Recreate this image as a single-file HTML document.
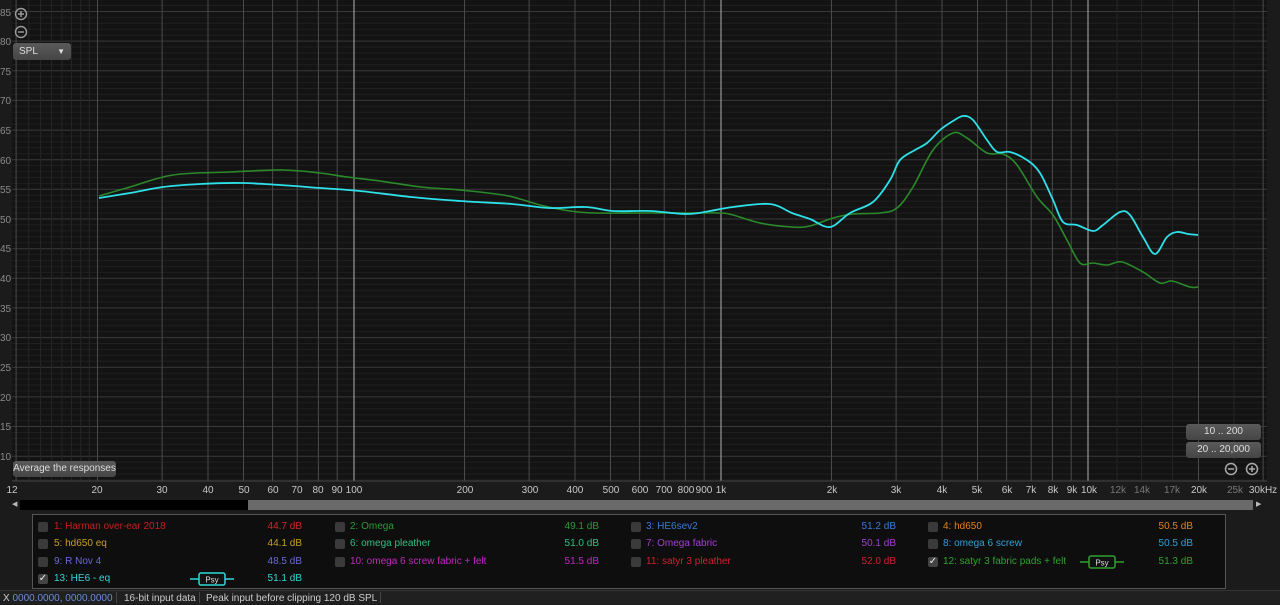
<!DOCTYPE html>
<html><head><meta charset="utf-8"><style>
body{margin:0;width:1280px;height:603px;background:#1b1b1b;overflow:hidden;font-family:"Liberation Sans",sans-serif;position:relative}
.a{position:absolute;white-space:nowrap}
.yl{position:absolute;left:0;font-size:10px;color:#8a8a8a;width:10px;text-align:left}
.xl{position:absolute;top:485px;font-size:10px;color:#c8c8c8;transform:translateX(-50%)}
.xl.g{color:#777}
.btn{position:absolute;background:linear-gradient(#5a5a5a,#454545);border-radius:3px;color:#ddd;font-size:10px;text-align:center}
.cb{position:absolute;width:10px;height:10px;background:#3a3a3a;border-radius:2px}
.lt{position:absolute;font-size:10px}
.ld{position:absolute;font-size:10px;text-align:right;width:60px}
.st{position:absolute;top:592px;height:11px;font-size:10px;color:#ccc;border-right:1px solid #444;padding:0 3px;line-height:13px}
</style></head><body>
<svg class="a" style="left:0;top:0" width="1280" height="500" id="g">
<rect x="12" y="0" width="1255" height="481" fill="#131313"/>
<g id="grid"></g>
<path id="c1" fill="none" stroke="#2a8a2a" stroke-width="1.6" data-p="99,196 130,187 173,175 230,172 283,170 320,173 347,177 380,181 421,187 460,190 503,195 520,199 540,205 570,211 595,213 640,213 687,213 720,213 733,215 760,223 792,227 810,226 833,218 853,214 880,213 897,208 913,187 933,150 953,133 967,138 987,153 1003,154 1017,165 1037,197 1053,215 1067,240 1080,263 1093,263 1107,265 1122,262 1143,272 1160,283 1172,281 1190,287 1198,287"/>
<path id="c2" fill="none" stroke="#2ee0e8" stroke-width="1.8" data-p="99,198 130,193 163,187 200,184 242,183 280,185 320,188 360,191 411,197 460,201 512,204 549,208 586,207 613,211 650,211 687,214 710,211 733,207 770,204 792,213 810,219 830,227 850,213 873,202 890,180 900,160 915,150 927,143 940,130 953,121 963,116 973,120 987,140 997,152 1010,152 1027,160 1040,173 1053,200 1063,222 1077,225 1093,231 1103,225 1120,212 1130,215 1143,237 1155,254 1167,237 1177,232 1188,234 1198,235"/>
</svg>
<script>
(function(){var s='',g=document.getElementById('grid');
function Y(d){return 219-(d-50)*5.93}
for(var d=6;d<=87;d++){var y=Y(d).toFixed(1);s+='<line x1="12" x2="1267" y1="'+y+'" y2="'+y+'" stroke="'+(d%5==0?'#3a3a3a':'#1f1f1f')+'"/>';}
function X(f){return 354+367*Math.log10(f/100)}
var fs=[12,13,14,15,16,17,18,19,20,30,40,50,60,70,80,90,100,200,300,400,500,600,700,800,900,1000,2000,3000,4000,5000,6000,7000,8000,9000,10000,12000,14000,17000,20000,25000,30000];
fs.forEach(function(f){var x=X(f).toFixed(1),c=(f==100||f==1000||f==10000)?'#b0b0b0':([12000,14000,17000,25000,13,14,15,16,17,18,19].indexOf(f)>=0?'#262626':'#4a4a4a');s+='<line x1="'+x+'" x2="'+x+'" y1="0" y2="481" stroke="'+c+'"/>';});
s+='<line x1="12" x2="1267" y1="481" y2="481" stroke="#444"/>';
g.innerHTML=s;
['c1','c2'].forEach(function(id){var e=document.getElementById(id);var p=e.getAttribute('data-p').split(' ').map(function(q){return q.split(',').map(Number)});
var d='M'+p[0][0]+' '+p[0][1];for(var i=0;i<p.length-1;i++){var p0=p[i-1]||p[i],p1=p[i],p2=p[i+1],p3=p[i+2]||p2;
d+=' C'+(p1[0]+(p2[0]-p0[0])/6).toFixed(1)+' '+(p1[1]+(p2[1]-p0[1])/6).toFixed(1)+' '+(p2[0]-(p3[0]-p1[0])/6).toFixed(1)+' '+(p2[1]-(p3[1]-p1[1])/6).toFixed(1)+' '+p2[0]+' '+p2[1];}
e.setAttribute('d',d);});
})();
</script>
<div class="yl" style="top:8px">85</div><div class="yl" style="top:37px">80</div><div class="yl" style="top:67px">75</div><div class="yl" style="top:96px">70</div><div class="yl" style="top:126px">65</div><div class="yl" style="top:156px">60</div><div class="yl" style="top:185px">55</div><div class="yl" style="top:215px">50</div><div class="yl" style="top:244px">45</div><div class="yl" style="top:274px">40</div><div class="yl" style="top:304px">35</div><div class="yl" style="top:333px">30</div><div class="yl" style="top:363px">25</div><div class="yl" style="top:393px">20</div><div class="yl" style="top:422px">15</div><div class="yl" style="top:452px">10</div>
<svg class="a" style="left:14px;top:7px" width="14" height="32"><circle cx="7" cy="7" r="5.5" fill="none" stroke="#999" stroke-width="1.5"/><path d="M4 7h6M7 4v6" stroke="#999" stroke-width="1.5"/><circle cx="7" cy="25" r="5.5" fill="none" stroke="#999" stroke-width="1.5"/><path d="M4 25h6" stroke="#999" stroke-width="1.5"/></svg>
<div class="btn" style="left:13px;top:43px;width:58px;height:17px;text-align:left;line-height:17px;padding-left:6px;box-sizing:border-box">SPL<span style="position:absolute;right:6px;top:0;font-size:8px">▼</span></div>
<div class="btn" style="left:13px;top:461px;width:103px;height:16px;line-height:16px">Average the responses</div>
<div class="btn" style="left:1186px;top:424px;width:75px;height:16px;line-height:16px">10 .. 200</div>
<div class="btn" style="left:1186px;top:442px;width:75px;height:16px;line-height:16px">20 .. 20,000</div>
<svg class="a" style="left:1224px;top:462px" width="38" height="14"><circle cx="7" cy="7" r="5.5" fill="none" stroke="#aaa" stroke-width="1.5"/><path d="M4 7h6" stroke="#aaa" stroke-width="1.5"/><circle cx="28" cy="7" r="5.5" fill="none" stroke="#aaa" stroke-width="1.5"/><path d="M25 7h6M28 4v6" stroke="#aaa" stroke-width="1.5"/></svg>
<div class="xl" style="left:12px">12</div><div class="xl" style="left:97px">20</div><div class="xl" style="left:162px">30</div><div class="xl" style="left:208px">40</div><div class="xl" style="left:244px">50</div><div class="xl" style="left:273px">60</div><div class="xl" style="left:297px">70</div><div class="xl" style="left:318px">80</div><div class="xl" style="left:337px">90</div><div class="xl" style="left:354px">100</div><div class="xl" style="left:465px">200</div><div class="xl" style="left:530px">300</div><div class="xl" style="left:575px">400</div><div class="xl" style="left:611px">500</div><div class="xl" style="left:640px">600</div><div class="xl" style="left:664px">700</div><div class="xl" style="left:686px">800</div><div class="xl" style="left:704px">900</div><div class="xl" style="left:721px">1k</div><div class="xl" style="left:832px">2k</div><div class="xl" style="left:896px">3k</div><div class="xl" style="left:942px">4k</div><div class="xl" style="left:977px">5k</div><div class="xl" style="left:1007px">6k</div><div class="xl" style="left:1031px">7k</div><div class="xl" style="left:1053px">8k</div><div class="xl" style="left:1072px">9k</div><div class="xl" style="left:1089px">10k</div><div class="xl g" style="left:1118px">12k</div><div class="xl g" style="left:1142px">14k</div><div class="xl g" style="left:1172px">17k</div><div class="xl" style="left:1199px">20k</div><div class="xl g" style="left:1235px">25k</div><div class="xl" style="left:1263px">30kHz</div>
<div class="a" style="left:12px;top:500px;font-size:7px;color:#bbb;line-height:10px">◀</div>
<div class="a" style="left:20px;top:500px;width:228px;height:10px;background:#000"></div>
<div class="a" style="left:248px;top:500px;width:1005px;height:10px;background:#6a6a6a"></div>
<div class="a" style="left:1256px;top:500px;font-size:7px;color:#bbb;line-height:10px">▶</div>
<div class="a" style="left:32px;top:514px;width:1192px;height:73px;background:#0e0e0e;border:1px solid #555"></div>
<div class="cb" style="left:38px;top:522px"></div><div class="lt" style="left:54px;top:521px;color:#c42020">1: Harman over-ear 2018</div><div class="ld" style="left:242px;top:521px;color:#d02828">44.7 dB</div>
<div class="cb" style="left:38px;top:539px"></div><div class="lt" style="left:54px;top:538px;color:#c8a020">5: hd650 eq</div><div class="ld" style="left:242px;top:538px;color:#c8a020">44.1 dB</div>
<div class="cb" style="left:38px;top:557px"></div><div class="lt" style="left:54px;top:556px;color:#6a6ad8">9: R Nov 4</div><div class="ld" style="left:242px;top:556px;color:#6a6ad8">48.5 dB</div>
<div class="cb" style="left:38px;top:574px;background:#444;color:#eee;font-size:10px;line-height:10px;text-align:center">✓</div><div class="lt" style="left:54px;top:573px;color:#30d8d8">13: HE6 - eq</div><div class="ld" style="left:242px;top:573px;color:#30d8d8">51.1 dB</div>
<svg class="a" style="left:190px;top:572px" width="44" height="14"><path d="M0 7h9M35 7h9" stroke="#30d8d8" stroke-width="1.5"/><rect x="9" y="1" width="26" height="12" rx="2" fill="#111" stroke="#30d8d8" stroke-width="1.5"/><text x="22" y="10.5" font-size="8" fill="#ddd" text-anchor="middle" font-family="Liberation Sans">Psy</text></svg>
<div class="cb" style="left:335px;top:522px"></div><div class="lt" style="left:350px;top:521px;color:#2a9a3a">2: Omega</div><div class="ld" style="left:539px;top:521px;color:#2a9a3a">49.1 dB</div>
<div class="cb" style="left:335px;top:539px"></div><div class="lt" style="left:350px;top:538px;color:#30c080">6: omega pleather</div><div class="ld" style="left:539px;top:538px;color:#30c080">51.0 dB</div>
<div class="cb" style="left:335px;top:557px"></div><div class="lt" style="left:350px;top:556px;color:#c028c0">10: omega 6 screw fabric + felt</div><div class="ld" style="left:539px;top:556px;color:#c028c0">51.5 dB</div>
<div class="cb" style="left:631px;top:522px"></div><div class="lt" style="left:646px;top:521px;color:#3a7ad8">3: HE6sev2</div><div class="ld" style="left:836px;top:521px;color:#3a7ad8">51.2 dB</div>
<div class="cb" style="left:631px;top:539px"></div><div class="lt" style="left:646px;top:538px;color:#a040d0">7: Omega fabric</div><div class="ld" style="left:836px;top:538px;color:#a040d0">50.1 dB</div>
<div class="cb" style="left:631px;top:557px"></div><div class="lt" style="left:646px;top:556px;color:#d02030">11: satyr 3 pleather</div><div class="ld" style="left:836px;top:556px;color:#d02030">52.0 dB</div>
<div class="cb" style="left:928px;top:522px"></div><div class="lt" style="left:943px;top:521px;color:#e08020">4: hd650</div><div class="ld" style="left:1133px;top:521px;color:#e08020">50.5 dB</div>
<div class="cb" style="left:928px;top:539px"></div><div class="lt" style="left:943px;top:538px;color:#30a0d8">8: omega 6 screw</div><div class="ld" style="left:1133px;top:538px;color:#30a0d8">50.5 dB</div>
<div class="cb" style="left:928px;top:557px;background:#444;color:#eee;font-size:10px;line-height:10px;text-align:center">✓</div><div class="lt" style="left:943px;top:556px;color:#30a030">12: satyr 3 fabric pads + felt</div><div class="ld" style="left:1133px;top:556px;color:#30a030">51.3 dB</div>
<svg class="a" style="left:1080px;top:555px" width="44" height="14"><path d="M0 7h9M35 7h9" stroke="#30a030" stroke-width="1.5"/><rect x="9" y="1" width="26" height="12" rx="2" fill="#111" stroke="#30a030" stroke-width="1.5"/><text x="22" y="10.5" font-size="8" fill="#ddd" text-anchor="middle" font-family="Liberation Sans">Psy</text></svg>
<div class="a" style="left:0;top:590px;width:1280px;height:13px;background:#202020;border-top:1px solid #333"></div>
<div class="st" style="left:0;color:#6a8ad8"><span style="color:#ccc">X</span> 0000.0000, 0000.0000</div>
<div class="st" style="left:121px">16-bit input data</div>
<div class="st" style="left:203px">Peak input before clipping 120 dB SPL</div>
</body></html>
